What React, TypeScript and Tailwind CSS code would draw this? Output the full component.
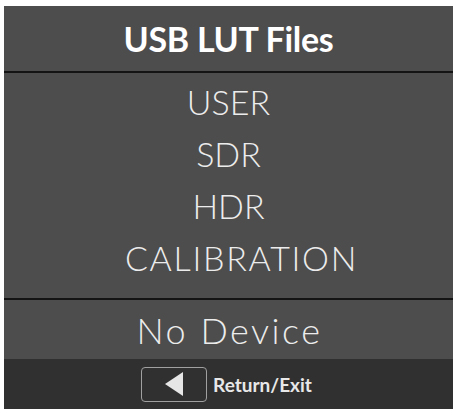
import React from "react";

const items = [
  { t: "USER", c: "" },
  { t: "SDR", c: "" },
  { t: "HDR", c: "" },
  { t: "CALIBRATION", c: "pl-[26px] tracking-[1.7px]" },
];

export default function App() {
  return (
    <div className="w-[456px] h-[409px] bg-white pt-[6px] pl-[4px] overflow-hidden">
      <div className="w-[449px] h-[403px] bg-[#4d4d4d] flex flex-col">
        <div className="h-[65px] flex items-center justify-center">
          <span className="text-white font-bold text-[34px] leading-none tracking-[-0.3px] font-['Lato',sans-serif]">
            USB LUT Files
          </span>
        </div>
        <div className="h-[2px] bg-[#141414]" />
        <div className="h-[225px] flex flex-col pt-[3px]">
          {items.map((it) => (
            <div
              key={it.t}
              className={`h-[52px] flex items-center justify-center text-[#ececec] font-light text-[34px] leading-none font-['Lato',sans-serif] ${it.c}`}
            >
              {it.t}
            </div>
          ))}
        </div>
        <div className="h-[2px] bg-[#141414]" />
        <div className="h-[59px] flex items-center justify-center text-[#ececec] font-light text-[36px] leading-none tracking-[2.5px] pl-[2px] font-['Lato',sans-serif]">
          No Device
        </div>
        <div className="flex-1 bg-[#303030] flex items-center justify-center gap-[6px] pr-[4px]">
          <div className="w-[66px] h-[35px] rounded-[4px] border-[1.5px] border-[#a0a0a0] flex items-center justify-center">
            <svg width="20" height="24" viewBox="0 0 20 24">
              <polygon points="19,0 19,24 1,12" fill="#e6e6e6" />
            </svg>
          </div>
          <span className="text-[#e8e8e8] font-bold text-[19px] leading-none font-['Lato',sans-serif]">
            Return/Exit
          </span>
        </div>
      </div>
    </div>
  );
}
